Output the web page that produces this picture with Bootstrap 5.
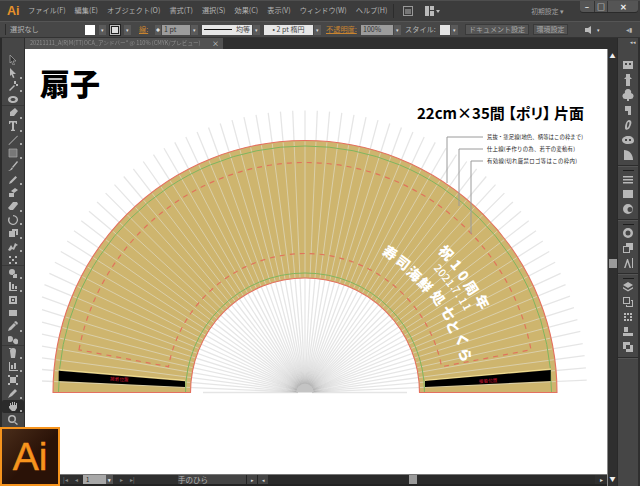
<!DOCTYPE html>
<html lang="ja">
<head>
<meta charset="UTF-8">
<title>扇子</title>
<link href="https://cdn.jsdelivr.net/npm/bootstrap@5.3.0/dist/css/bootstrap.min.css" rel="stylesheet">
<style>
html, body { height: 486px; overflow: hidden; background: #2f2f2f; }
body, svg text { font-family: "Noto Sans CJK JP", "Liberation Sans", sans-serif; }
.ai-app { width: 640px; height: 486px; color: #b4b4b4; font-size: 7.2px; line-height: 1; }
.art-head { font-feature-settings: "palt"; }

/* menu bar */
.menu-row { height: 21px; background: #3c3c3c; border-top: 1px solid #4e4e4e; }
.ai-mark { width: 28px; padding-left: 7px; color: #e8922a; font: bold 12.5px "Liberation Sans", sans-serif; }
.menu-item { margin-right: 9px; white-space: nowrap; }
.menu-sep { width: 1px; height: 14px; background: #2c2c2c; margin: 0 9px 0 6px; }
.preset { color: #a0a0a0; font-size: 6.8px; margin-left: auto; margin-right: 16px; }
.win-btns { width: 58px; height: 11px; margin-right: 2px; align-self: flex-start; background: #555; border-radius: 0 0 3px 3px; box-shadow: 0 1px 0 #2a2a2a; }
.win-btns > div { height: 100%; border-right: 1px solid #333; color: #eee; font-size: 8px; font-weight: 700; }

/* control bar */
.ctl-row { height: 17px; background: #474747; border-top: 1px solid #555; border-bottom: 1px solid #333; }
.ctl-grip { width: 1px; height: 11px; background: #2c2c2c; margin: 0 4px 0 5px; }
.ctl-txt { font-size: 7.2px; white-space: nowrap; }
.ctl-orange { color: #c9842f; text-decoration: underline; }
.swatch { width: 10px; height: 10px; background: #fff; }
.swatch-st { width: 10px; height: 10px; background: #222; border: 1px solid #bbb; outline: 1px solid #222; padding: 1px; }
.swatch-st i { display: block; width: 100%; height: 100%; background: #ddd; }
.dd { width: 7px; height: 10px; background: #5a5a5a; margin-left: 1px; color: #ddd; font-size: 5px; flex: none; }
.spin { width: 6px; height: 10px; background: #5a5a5a; margin-right: 1px; color: #ddd; font-size: 4px; flex: none; }
.ctl-input { height: 10px; background: #9c9c9c; color: #333; font-size: 7px; padding-left: 2px; }
.ctl-white { height: 10px; background: #e6e6e6; color: #444; font-size: 7px; }
.stroke-line { height: 1px; background: #111; }
.ctl-btn { height: 11px; background: #555; border: 1px solid #3a3a3a; color: #a8a8a8; font-size: 7px; }

/* document */
.work { height: 448px; }
.tool-col { width: 25px; height: 448px; background: #464646; border-left: 2px solid #2a2a2a; border-right: 1px solid #2e2e2e; padding-top: 15px; flex: none; }
.tool-item { height: 13.33px; position: relative; flex: none; }
.tool-item svg { width: 10px; height: 10px; display: block; filter: blur(.35px); }
.tool-item.has-sub::after { content: ""; position: absolute; right: 2px; bottom: 1px; width: 2px; height: 2px; background: #ccc; border-radius: 50%; }
.tool-item.active-tool { background: #2b2b2b; border-radius: 2px; }
.tool-item.sep-top { box-shadow: 0 -1px 0 #383838; }
.doc-col { width: 582px; flex: none; }
.tab-strip { height: 11px; background: #2f2f2f; }
.doc-tab { width: 198px; height: 11px; background: #525252; color: #8e8e8e; font-size: 5.6px; padding: 0 4px 0 5px; white-space: nowrap; overflow: hidden; }
.doc-tab span { filter: blur(.3px); }
.doc-close { color: #ddd; font-size: 7px; margin-left: auto; }
.art-area { height: 425px; background: #fff; overflow: hidden; }
.art-area svg { display: block; }
.status-row { height: 12px; background: #2f2f2f; border-top: 1px solid #777; border-bottom: 2px solid #232323; color: #b5b5b5; font-size: 7.5px; }
.st-nav { width: 58px; color: #888; font-size: 6px; padding-left: 38px; gap: 7px; }
.st-input { width: 30px; height: 9px; background: #a8a8a8; color: #222; font-size: 6px; padding-left: 3px; }
.st-input b { margin-left: auto; width: 7px; height: 9px; background: #555; color: #eee; font-size: 5px; }
.st-nav2 { width: 65px; color: #888; font-size: 6px; padding-left: 7px; gap: 7px; }
.st-label { width: 68px; background: #444; height: 9px; }
.st-arrow { width: 11px; height: 9px; color: #ddd; font-size: 5px; background: #444; border-left: 1px solid #222; }
.st-track { flex: 1 1 auto; height: 9px; background: #2a2a2a; }
.st-thumb { width: 8px; height: 9px; background: #9a9a9a; margin-left: 141px; }
.st-arrow-r { width: 12px; height: 9px; color: #ddd; font-size: 6px; }
.v-scroll { width: 10px; height: 437px; margin-top: 11px; background: #2f2f2f; border-left: 1px solid #8a8a8a; color: #eee; font-size: 6px; flex: none; }
.v-thumb { width: 8px; height: 9px; background: #9a9a9a; margin-top: 200px; }
.dock { width: 23px; height: 448px; background: #2f2f2f; flex: none; }
.dock-inner { width: 21px; height: 448px; margin-right: 2px; background: #464646; border-left: 1px solid #2a2a2a; }
.dock-top { height: 19px; color: #ccc; font-size: 5px; text-align: right; padding: 1px 2px 0 0; }
.dock-handle { height: 1px; width: 11px; background: #1e1e1e; margin: 0 auto; flex: none; }
.dock-ic { height: 15px; flex: none; }
.dock-ic svg { width: 12px; height: 12px; display: block; filter: blur(.35px); }
.dock-group { border-bottom: 1px solid #2c2c2c; box-shadow: 0 1px 0 #555; padding-bottom: 3px; }
.logo-badge { position: absolute; left: 0; top: 427px; width: 60px; height: 59px; background: linear-gradient(135deg, #4a2d1a, #2a1207 55%); border: 2px solid #f7941d; color: #f7941d; font: 39px/1 "Liberation Sans", sans-serif; padding-bottom: 1px; -webkit-text-stroke: .5px #f7941d; }
</style>
</head>
<body class="m-0 position-relative">
<div class="ai-app d-flex flex-column">

  <div class="menu-row d-flex align-items-center">
    <div class="ai-mark">Ai</div>
    <div class="menu-item">ファイル(F)</div>
    <div class="menu-item">編集(E)</div>
    <div class="menu-item">オブジェクト(O)</div>
    <div class="menu-item">書式(T)</div>
    <div class="menu-item">選択(S)</div>
    <div class="menu-item">効果(C)</div>
    <div class="menu-item">表示(V)</div>
    <div class="menu-item">ウィンドウ(W)</div>
    <div class="menu-item m-0">ヘルプ(H)</div>
    <div class="menu-sep"></div>
    <svg width="10" height="10" viewBox="0 0 10 10"><rect x=".5" y=".5" width="9" height="9" fill="none" stroke="#999"/><rect x="2" y="3" width="6" height="5" fill="#777"/></svg>
    <svg style="margin-left:12px" width="16" height="10" viewBox="0 0 16 10"><path d="M0 0h4v10H0zM5 0h4v4H5zM5 5h4v5H5z" fill="#bbb"/><path d="M11 4h4l-2 3z" fill="#bbb"/></svg>
    <div class="preset">初期設定 ▾</div>
    <div class="win-btns d-flex">
      <div class="d-flex align-items-center justify-content-center" style="width:15px">&#8211;</div>
      <div class="d-flex align-items-center justify-content-center" style="width:13px">&#9633;</div>
      <div class="d-flex align-items-center justify-content-center border-0" style="width:30px">&#10005;</div>
    </div>
  </div>

  <div class="ctl-row d-flex align-items-center">
    <div class="ctl-grip"></div>
    <div class="ctl-txt" style="width:75px">選択なし</div>
    <div class="swatch"></div><div class="dd d-flex align-items-center justify-content-center ms-1">▾</div>
    <div class="swatch-st ms-1"><i></i></div><div class="dd d-flex align-items-center justify-content-center ms-1">▾</div>
    <div class="ctl-txt ctl-orange ms-2" style="width:16px">線:</div>
    <div class="spin d-flex align-items-center justify-content-center">◆</div>
    <div class="ctl-input d-flex align-items-center" style="width:28px">1 pt</div><div class="dd d-flex align-items-center justify-content-center">▾</div>
    <div class="ctl-white d-flex align-items-center ms-1" style="width:50px;padding:0 2px"><div class="stroke-line flex-grow-1"></div><span class="ms-1">均等</span></div><div class="dd d-flex align-items-center justify-content-center">▾</div>
    <div class="ctl-white d-flex align-items-center justify-content-center ms-1" style="width:49px">• 2 pt 楕円</div><div class="dd d-flex align-items-center justify-content-center">▾</div>
    <div class="ctl-txt ctl-orange" style="margin-left:5px;width:35px">不透明度:</div>
    <div class="ctl-input d-flex align-items-center" style="width:32px">100%</div><div class="dd d-flex align-items-center justify-content-center">▾</div>
    <div class="ctl-txt" style="margin-left:4px;width:35px">スタイル:</div>
    <div class="swatch" style="background:#e4e4e4"></div><div class="dd d-flex align-items-center justify-content-center">▾</div>
    <div class="ctl-btn d-flex align-items-center justify-content-center" style="margin-left:7px;width:64px">ドキュメント設定</div>
    <div class="ctl-btn d-flex align-items-center justify-content-center ms-1" style="width:35px">環境設定</div>
    <svg class="ms-3" width="10" height="10" viewBox="0 0 10 10"><path d="M1 3h3l3-2v8L4 7H1z" fill="#bbb"/></svg>
    <div class="dd bg-transparent d-flex align-items-center justify-content-center">▾</div>
    <div class="ms-auto me-2 ctl-txt" style="font-size:6px">◂▮</div>
  </div>

  <div class="work d-flex">
    <div class="tool-col d-flex flex-column" id="tools"></div>

    <div class="doc-col d-flex flex-column">
      <div class="tab-strip">
        <div class="doc-tab d-flex align-items-center"><span>20211111_A(R)M(TT)OCA_アンドバー* @ 110% (CMYK/プレビュー)</span><div class="doc-close">×</div></div>
      </div>
      <div class="art-area">
        <svg id="art" width="582" height="425" viewBox="25 49 582 425">
          <g id="rays-out" stroke="#000" stroke-opacity=".1" stroke-width="1.300"></g>
          <path d="M53 392.500A252 252 0 0 1 557 392.500H419.500A114.500 114.500 0 0 0 190.500 392.500Z" fill="#ceb56e"/>
          <g id="rays-in" stroke="#ded7bd" stroke-opacity=".75" stroke-width="1"></g>
          <path d="M58.500 392.500A246.500 246.500 0 0 1 551.500 392.500M185.500 392.500A119.500 119.500 0 0 1 424.500 392.500" fill="none" stroke="#7fb55f" stroke-width="1"/>
          <path id="dash" fill="none" stroke="#e0745c" stroke-width="1.200" stroke-dasharray="5 5"/>
          <path d="M53 392.500A252 252 0 0 1 557 392.500H419.500A114.500 114.500 0 0 0 190.500 392.500Z" fill="none" stroke="#e4705f" stroke-width="1.100"/>
          <path d="M58.500 369.800L185 380.300M425 380.300L551 369" stroke="#f2df95" stroke-width="1"/>
          <path d="M58.700 370.700L185 381.300V387L58.700 381ZM425 387L425 381L550.700 370V381Z" fill="#000"/>
          <text transform="translate(110 380.500) rotate(3.500)" font-size="4.600" fill="#c5122f">接着位置</text>
          <text transform="translate(479 383) rotate(-3)" font-size="4.600" fill="#c5122f">接着位置</text>
          <path d="M447 183V137H483M459 206V149H483M471 234V161H483" fill="none" stroke="#9a9a9a" stroke-width="1"/>
          <g fill="#222" font-size="5.400">
            <text x="487" y="138.800" textLength="96">荒抜・塗足線(地色、柄等はこの枠まで)</text>
            <text x="487" y="150.800" textLength="88">仕上線(手作りの為、若干の変動有)</text>
            <text x="487" y="163" textLength="90">有効線(切れ厳禁ロゴ等はこの枠内)</text>
          </g>
          <text x="40" y="95" font-size="30" font-weight="900" fill="#000">扇子</text>
          <text class="art-head" x="417" y="119" font-size="15" font-weight="700" fill="#000">22cm×35間 【ポリ】 片面</text>
          <g id="fan-text" fill="#fff" font-weight="900" text-anchor="middle"></g>
        </svg>
      </div>
      <div class="status-row d-flex align-items-center">
        <div class="st-nav d-flex align-items-center">
          <span>|◂</span><span>◂</span>
        </div>
        <div class="st-input d-flex align-items-center">1<b class="d-flex align-items-center justify-content-center">▾</b></div>
        <div class="st-nav2 d-flex align-items-center"><span>▸</span><span>▸|</span></div>
        <div class="st-label d-flex align-items-center">手のひら</div>
        <div class="st-arrow d-flex align-items-center justify-content-center">▸</div>
        <div class="st-arrow d-flex align-items-center justify-content-center">◂</div>
        <div class="st-track d-flex align-items-center"><div class="st-thumb"></div></div>
        <div class="st-arrow-r d-flex align-items-center justify-content-center">▸</div>
      </div>
    </div>

    <div class="v-scroll d-flex flex-column align-items-center">
      <div class="mt-1">▲</div>
      <div class="v-thumb"></div>
      <div class="mt-auto mb-1">▼</div>
    </div>

    <div class="dock">
      <div class="dock-inner d-flex flex-column" id="dock"></div>
    </div>
  </div>

  <div class="logo-badge d-flex align-items-center justify-content-center">Ai</div>
</div>

<script>
  // left tool strip: path (10x10 box), has sub tools
  const tools = [
    ['M2 0L8 6H5L6.500 9.500 5 10 3.500 6.500 2 8Z', 0],
    ['M2 0L8 6H5L6.500 9.500 5 10 3.500 6.500 2 8Z', 1],
    ['M1 9L6 4 7 5 2 10ZM6 0H8V3H6ZM8 3H10V5H8Z', 1],
    ['M5 1C8 1 10 2.500 10 4.500S8 8 5 8 0 6.500 0 4.500 2 1 5 1ZM5 3C3.500 3 2.500 3.700 2.500 4.500S3.500 6 5 6 7.500 5.300 7.500 4.500 6.500 3 5 3ZM4 7L5 10', 0],
    ['M7 0L10 3 6 8 2 8 2 4ZM2 8L0 10', 1],
    ['M1 0H9V3H8L7.500 1.500H6V8.500L7 9V10H3V9L4 8.500V1.500H2.500L2 3H1Z', 1],
    ['M0.500 9.500L9.500 0.500L9.500 1.500L1 10Z', 1],
    ['M1 1H9V9H1Z', 1],
    ['M0 10C2 9 3 8 3.500 6.500L5 7.500C4 9 2 10 0 10ZM4 6L9 0 10 1 5 7Z', 0],
    ['M1 9L2 6.500 7.500 1 9 2.500 3.500 8Z', 1],
    ['M3 3L7 0 10 2 6 5ZM1 5H6V9H1Z', 0],
    ['M0 7L5 1H9L10 3 5 9H2Z', 1],
    ['M5 0A5 5 0 1 1 1 2L2 3A3.700 3.700 0 1 0 5 1.300Z', 1],
    ['M1 3H7V9H1ZM4 1H10V7H8V3H4Z', 1],
    ['M0 9L3 4 5 7 7 2 10 4 8 5 6 9 4 8 2 10Z', 1],
    ['M1 1H3V3H1ZM7 1H9V3H7ZM1 7H3V9H1ZM7 7H9V9H7ZM4 4H6V6H4Z', 0],
    ['M1 4A3 3 0 0 1 7 4A3 3 0 0 1 1 4ZM5 6H9V10H5Z', 1],
    ['M1 1H3V9H9V10H1ZM4 3H6V8H4ZM7 5H9V8H7Z', 1],
    ['M1 1H9V9H1ZM3 3V7H7V3ZM4 4H6V6H4Z', 0],
    ['M1 2H9V8H1Z', 0],
    ['M0 10L1 7 6 2 8 4 3 9ZM6 1L8 0 10 2 9 4Z', 1],
    ['M2 1A3 3 0 0 1 5 4A3 3 0 0 1 2 7A3 3 0 0 1 2 1ZM6 4A2.500 2.500 0 0 1 9 9A3 3 0 0 1 5 6Z', 0],
    ['M2 3A3 3 0 0 1 8 3L7 10H3ZM1 0H3V1H1Z', 1],
    ['M1 1H2V9H10V10H1ZM3 4H5V8H3ZM6 2H8V8H6Z', 1],
    ['M2 2H8V8H2ZM0 0H2V2H0ZM8 0H10V2H8ZM0 8H2V10H0ZM8 8H10V10H8Z', 0],
    ['M0 10L2 6 7 1 9 3 4 8Z', 1],
    ['M2 5V2H3V4H4V1H5V4H6V1H7V4H8V2H9V7L7 10H4L1 7V5Z', 1],
    ['M4 0A4 4 0 1 1 4 8A4 4 0 0 1 4 0ZM4 1.500A2.500 2.500 0 1 0 4 6.500A2.500 2.500 0 0 0 4 1.500ZM6.500 6.500L10 9 9 10 6 7.500Z', 0]
  ];
  const sepBefore = [4, 16, 22];
  let toolHtml = '';
  tools.forEach((t, i) => {
    let cls = 'tool-item d-flex align-items-center justify-content-center';
    if (t[1]) cls += ' has-sub';
    if (i == 26) cls += ' active-tool';
    if (sepBefore.includes(i)) cls += ' sep-top';
    const fill = (i == 0) ? '#333' : (i == 7 ? '#777' : '#b8b8b8');
    toolHtml += `<div class="${cls}"><svg viewBox="0 0 10 10"><path fill-rule="evenodd" d="${t[0]}" fill="${fill}" stroke="${i == 0 || i == 7 ? '#aaa' : 'none'}" stroke-width=".7"/></svg></div>`;
  });
  document.getElementById('tools').innerHTML = toolHtml;

  // right dock icons by group
  const dockGroups = [
    ['M1 2H11V10H1ZM3 4V6H5V4ZM7 4V6H9V4Z', 'M4 0H8V3L10 5H8V12H4V5H2L4 3Z', 'M6 0A3 3 0 0 1 9 4A3 3 0 0 1 8 10H7V12H5V10H4A3 3 0 0 1 3 4A3 3 0 0 1 6 0Z', 'M3 2H9V11H6V7H3Z', 'M7 1C10 1 10 4 8 8 7 11 3 12 3 9 3 5 5 1 7 1ZM6.500 3C5.500 3 5 6 5 8.500 6 9.500 7 7 7.500 4 7.500 3 7 3 6.500 3Z', 'M6 2C10 2 12 4 12 7 12 9 10 10 6 10 2 10 0 8 0 6 0 4 3 2 6 2ZM3 5V7H5V5ZM7 5V7H9V5Z', 'M2 1C7 1 11 5 11 11H2Z'],
    ['M1 3H11V4.500H1ZM1 6H11V7.500H1ZM1 9H11V10.500H1Z', 'M1 2H11V10H1Z', 'M6 1A5 5 0 1 1 6 11A5 5 0 0 1 6 1ZM8 4A2.500 2.500 0 1 0 8 9A2.500 2.500 0 0 0 8 4Z'],
    ['M6 1A5 5 0 1 1 6 11A5 5 0 0 1 6 1ZM6 3.500A2.500 2.500 0 1 0 6 8.500A2.500 2.500 0 0 0 6 3.500Z', 'M1 4H4V1H11V8H8V11H1ZM2 5V10H7V5Z', 'M2 11L5 2H6L9 11H7.500L5.500 5 3.500 11ZM10 1H11V11H10Z'],
    ['M6 1L11 4 6 7 1 4ZM1 6L6 9 11 6V7.500L6 10.500 1 7.500Z', 'M1 1H8V8H1ZM2 2V7H7V2ZM4 4H11V11H4V9H5V10H10V5H9V4Z', 'M2 2H4V4H2ZM5 2H7V4H5ZM8 2H10V4H8ZM2 5H4V7H2ZM8 5H10V7H8ZM2 8H4V10H2ZM5 8H7V10H5ZM8 8H10V10H8Z', 'M2 1H6V6H2ZM1 7H11V10H1Z', 'M1 1H8V8H1ZM4 4H11V11H4Z']
  ];
  let dockHtml = '<div class="dock-top">◂◂</div>';
  dockGroups.forEach((g, gi) => {
    dockHtml += '<div class="dock-group d-flex flex-column">';
    if (gi > 0) dockHtml += '<div class="dock-handle mt-1"></div>';
    g.forEach(d => {
      dockHtml += `<div class="dock-ic d-flex align-items-center justify-content-center"><svg viewBox="0 0 12 12"><path fill-rule="evenodd" fill="#b8b8b8" d="${d}"/></svg></div>`;
    });
    dockHtml += '</div>';
  });
  document.getElementById('dock').innerHTML = dockHtml;

  // fan artwork
  const cx = 305, cy = 392.5;
  let raysOut = '', raysIn = '';
  for (let a = 0; a <= 180; a += 2.5) {
    const rad = a * Math.PI / 180;
    const c = Math.cos(rad), s = Math.sin(rad);
    let r = 282;
    if (a == 0 || a == 180) r = 102;
    if (cx - r * Math.abs(c) < 42 && c < 0) r = (cx - 42) / -c;
    raysOut += `<line x1="${cx + 7 * c}" y1="${cy - 7 * s}" x2="${cx + r * c}" y2="${cy - r * s}"/>`;
    if (a > 0 && a < 180) raysIn += `<line x1="${cx + 115 * c}" y1="${cy - 115 * s}" x2="${cx + 251 * c}" y2="${cy - 251 * s}"/>`;
  }
  document.getElementById('rays-out').innerHTML = raysOut + '<path d="M296 392.500A9 9 0 0 1 314 392.500Z" fill="#c4c4c4" stroke="none" fill-opacity="1"/>';
  document.getElementById('rays-in').innerHTML = raysIn;

  // dashed safe area
  const da = 10.7 * Math.PI / 180;
  const pt = (r, a) => `${cx + r * Math.cos(a)} ${cy - r * Math.sin(a)}`;
  document.getElementById('dash').setAttribute('d',
    `M${pt(230, Math.PI - da)}A230 230 0 0 1 ${pt(230, da)}L${pt(139, da)}A139 139 0 0 0 ${pt(139, Math.PI - da)}Z`);

  // white lettering, each glyph turned to follow the fan
  const lines = [
    [14, 900, [['祝',446,253],['1',456,265],['0',463,276],['周',471,288],['年',482,302]]],
    [10.5, 500, [['2',438,268],['0',442,273],['2',446,278],['1',450,283],['.',454,287],['7',456,290],['.',459,295],['1',463,301],['1',467,307]]],
    [14, 900, [['寿',390,253],['司',403,263],['海',414,274],['鮮',425,285],['処',438,298],['七',448,313],['と',453,327],['く',462,340],['ら',465,355]]]
  ];
  let ft = '';
  lines.forEach(l => {
    l[2].forEach(g => {
      const rot = 90 - Math.atan2(cy - g[2], g[1] - cx) * 180 / Math.PI;
      ft += `<text font-size="${l[0]}" font-weight="${l[1]}" transform="translate(${g[1]} ${g[2]}) rotate(${rot.toFixed(1)})" y="${l[0] * 0.36}">${g[0]}</text>`;
    });
  });
  document.getElementById('fan-text').innerHTML = ft;
</script>
<script src="https://cdn.jsdelivr.net/npm/bootstrap@5.3.0/dist/js/bootstrap.bundle.min.js"></script>
</body>
</html>
